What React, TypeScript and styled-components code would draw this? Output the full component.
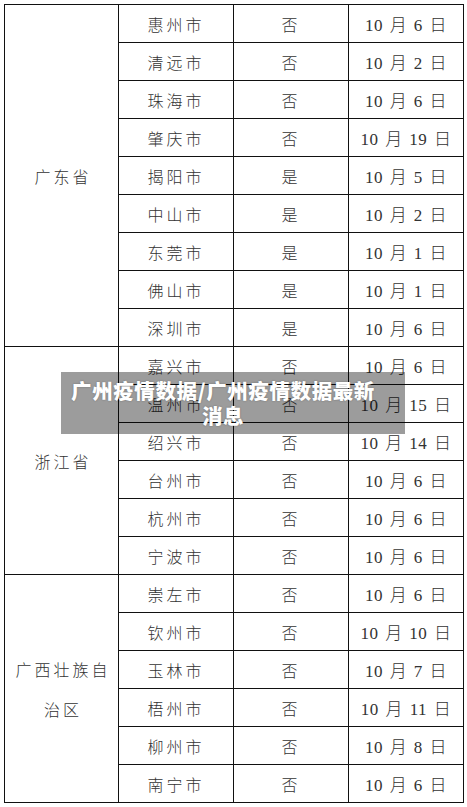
import React, { FunctionComponent, ReactElement } from 'react'
import styled, { createGlobalStyle } from 'styled-components'

const GlobalStyle = createGlobalStyle`
  html, body {
    margin: 0;
    padding: 0;
    background: #fff;
  }
`

const Page = styled.div`
  padding: 4px;
  position: relative;
  width: 467px;
  box-sizing: border-box;
`

const Table = styled.table`
  border-collapse: collapse;
  table-layout: fixed;
  width: 460px;
`

const Row = styled.tr`
  height: 38px;
`

const Cell = styled.td<{ $serif?: boolean }>`
  border: 1px solid #111;
  color: #333;
  font-family: ${(p) =>
    p.$serif
      ? '"Liberation Serif", "Noto Sans CJK SC", serif'
      : '"Noto Sans CJK SC", sans-serif'};
  font-size: ${(p) => (p.$serif ? '17px' : '16px')};
  font-weight: 300;
  letter-spacing: ${(p) => (p.$serif ? '0.5px' : '3px')};
  word-spacing: ${(p) => (p.$serif ? '2px' : '0')};
  padding: 0;
  text-align: center;
  vertical-align: middle;
  white-space: pre;
`

const ProvinceCell = styled(Cell)`
  line-height: 40px;
  white-space: normal;
  padding: 0 0 0 3px;
`

const Overlay = styled.div`
  background: rgba(0, 0, 0, 0.39);
  box-sizing: border-box;
  color: #fff;
  font-family: "Noto Sans CJK SC", sans-serif;
  font-size: 20.5px;
  font-weight: 900;
  height: 62px;
  left: 61px;
  letter-spacing: 0.6px;
  line-height: 25px;
  padding: 6px 20px 0 0;
  position: absolute;
  text-align: center;
  text-shadow: 0 0 2px rgba(0, 0, 0, 0.3);
  top: 372px;
  white-space: nowrap;
  width: 344px;
`

type Group = {
  province: string[]
  rows: [string, string, string][]
}

const groups: Group[] = [
  {
    province: ['广东省'],
    rows: [
      ['惠州市', '否', '6'],
      ['清远市', '否', '2'],
      ['珠海市', '否', '6'],
      ['肇庆市', '否', '19'],
      ['揭阳市', '是', '5'],
      ['中山市', '是', '2'],
      ['东莞市', '是', '1'],
      ['佛山市', '是', '1'],
      ['深圳市', '是', '6'],
    ],
  },
  {
    province: ['浙江省'],
    rows: [
      ['嘉兴市', '否', '6'],
      ['温州市', '否', '15'],
      ['绍兴市', '否', '14'],
      ['台州市', '否', '6'],
      ['杭州市', '否', '6'],
      ['宁波市', '否', '6'],
    ],
  },
  {
    province: ['广西壮族自', '治区'],
    rows: [
      ['崇左市', '否', '6'],
      ['钦州市', '否', '10'],
      ['玉林市', '否', '7'],
      ['梧州市', '否', '11'],
      ['柳州市', '否', '8'],
      ['南宁市', '否', '6'],
    ],
  },
]

const App: FunctionComponent = (): ReactElement => (
  <Page>
    <GlobalStyle />
    <Table>
      <colgroup>
        <col style={{ width: 114 }} />
        <col style={{ width: 115 }} />
        <col style={{ width: 115 }} />
        <col style={{ width: 115 }} />
      </colgroup>
      <tbody>
        {groups.map((g) =>
          g.rows.map(([city, flag, day], i) => (
            <Row key={city}>
              {i === 0 && (
                <ProvinceCell rowSpan={g.rows.length}>
                  {g.province.map((line) => (
                    <div key={line}>{line}</div>
                  ))}
                </ProvinceCell>
              )}
              <Cell>{city}</Cell>
              <Cell>{flag}</Cell>
              <Cell $serif>{`10 月 ${day} 日`}</Cell>
            </Row>
          ))
        )}
      </tbody>
    </Table>
    <Overlay>
      广州疫情数据/广州疫情数据最新
      <br />
      消息
    </Overlay>
  </Page>
)

export default App
